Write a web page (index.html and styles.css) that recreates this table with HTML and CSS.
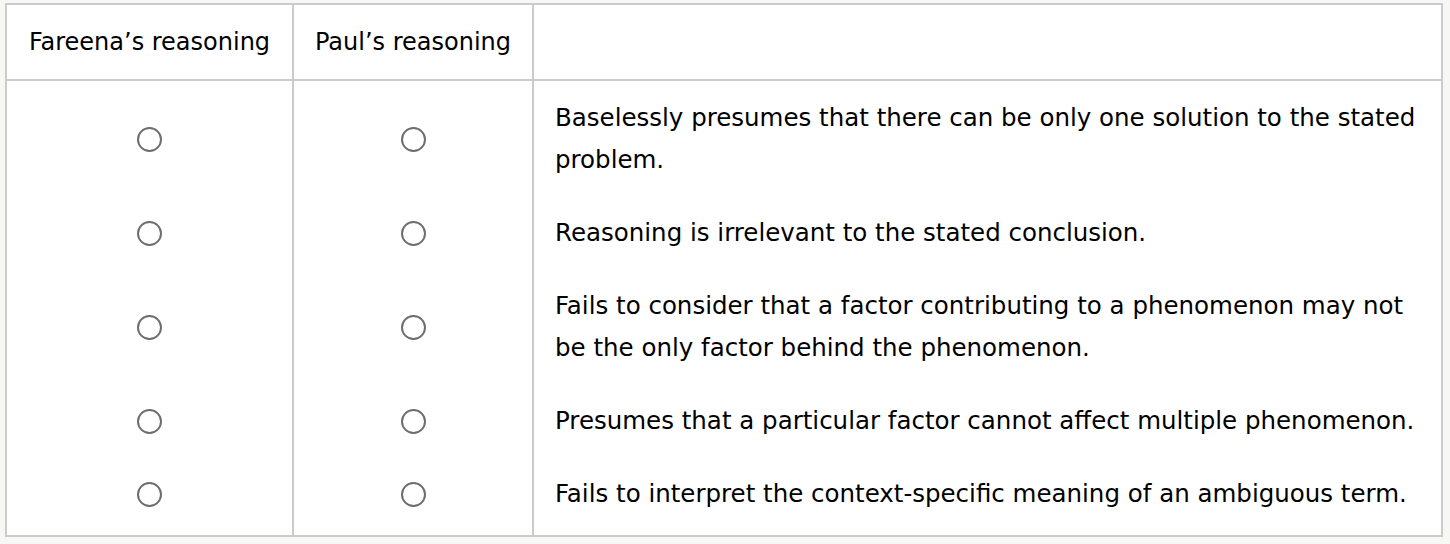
FILE: index.html
```html
<!DOCTYPE html>
<html lang="en">
<head>
<meta charset="utf-8">
<title>Reasoning matrix</title>
<link rel="stylesheet" href="styles.css">
</head>
<body>
<div class="page">
  <table class="matrix">
    <thead>
      <tr>
        <th class="col-a">Fareena’s reasoning</th>
        <th class="col-b">Paul’s reasoning</th>
        <th class="col-c"></th>
      </tr>
    </thead>
    <tbody>
      <tr>
        <td class="choice"><input type="radio" class="radio" name="r1a"></td>
        <td class="choice"><input type="radio" class="radio" name="r1b"></td>
        <td class="stmt">Baselessly presumes that there can be only one solution to the stated problem.</td>
      </tr>
      <tr>
        <td class="choice"><input type="radio" class="radio" name="r2a"></td>
        <td class="choice"><input type="radio" class="radio" name="r2b"></td>
        <td class="stmt">Reasoning is irrelevant to the stated conclusion.</td>
      </tr>
      <tr>
        <td class="choice"><input type="radio" class="radio" name="r3a"></td>
        <td class="choice"><input type="radio" class="radio" name="r3b"></td>
        <td class="stmt">Fails to consider that a factor contributing to a phenomenon may not be the only factor behind the phenomenon.</td>
      </tr>
      <tr>
        <td class="choice"><input type="radio" class="radio" name="r4a"></td>
        <td class="choice"><input type="radio" class="radio" name="r4b"></td>
        <td class="stmt">Presumes that a particular factor cannot affect multiple phenomenon.</td>
      </tr>
      <tr>
        <td class="choice"><input type="radio" class="radio" name="r5a"></td>
        <td class="choice"><input type="radio" class="radio" name="r5b"></td>
        <td class="stmt">Fails to interpret the context-specific meaning of an ambiguous term.</td>
      </tr>
    </tbody>
  </table>
</div>
</body>
</html>
```

FILE: styles.css
```css
html, body {
  margin: 0;
  padding: 0;
  background: #f7f7f3;
}

.page {
  padding: 3px 0 0 5px;
}

.matrix {
  box-sizing: border-box;
  width: 1438px;
  table-layout: fixed;
  border-collapse: separate;
  border-spacing: 0;
  border: 2px solid #cbcbcb;
  background: #ffffff;
  font-family: "DejaVu Sans", Verdana, sans-serif;
  font-size: 24px;
  line-height: 42px;
  color: #000000;
}

.matrix th,
.matrix td {
  box-sizing: border-box;
}

.matrix th {
  font-weight: normal;
  text-align: center;
  padding: 16px 0;
  border-bottom: 2px solid #cbcbcb;
  white-space: nowrap;
}

.col-a { width: 287px; }
.col-b { width: 240px; }
.col-c { width: auto; }

.matrix th.col-a,
.matrix th.col-b,
.matrix td.choice {
  border-right: 2px solid #cbcbcb;
}

.matrix td {
  padding: 16px 0 15px;
  vertical-align: middle;
}

.matrix tbody tr:last-child td {
  padding-bottom: 20px;
}

.choice {
  text-align: center;
}

.matrix td.stmt {
  text-align: left;
  font-size: 24.5px;
  padding-left: 21px;
  padding-right: 21px;
}

.radio {
  appearance: none;
  -webkit-appearance: none;
  box-sizing: border-box;
  display: inline-block;
  width: 25px;
  height: 25px;
  margin: 0 0 2px;
  vertical-align: middle;
  border: 2px solid #6e6e6e;
  border-radius: 50%;
  background: #ffffff;
}
```
